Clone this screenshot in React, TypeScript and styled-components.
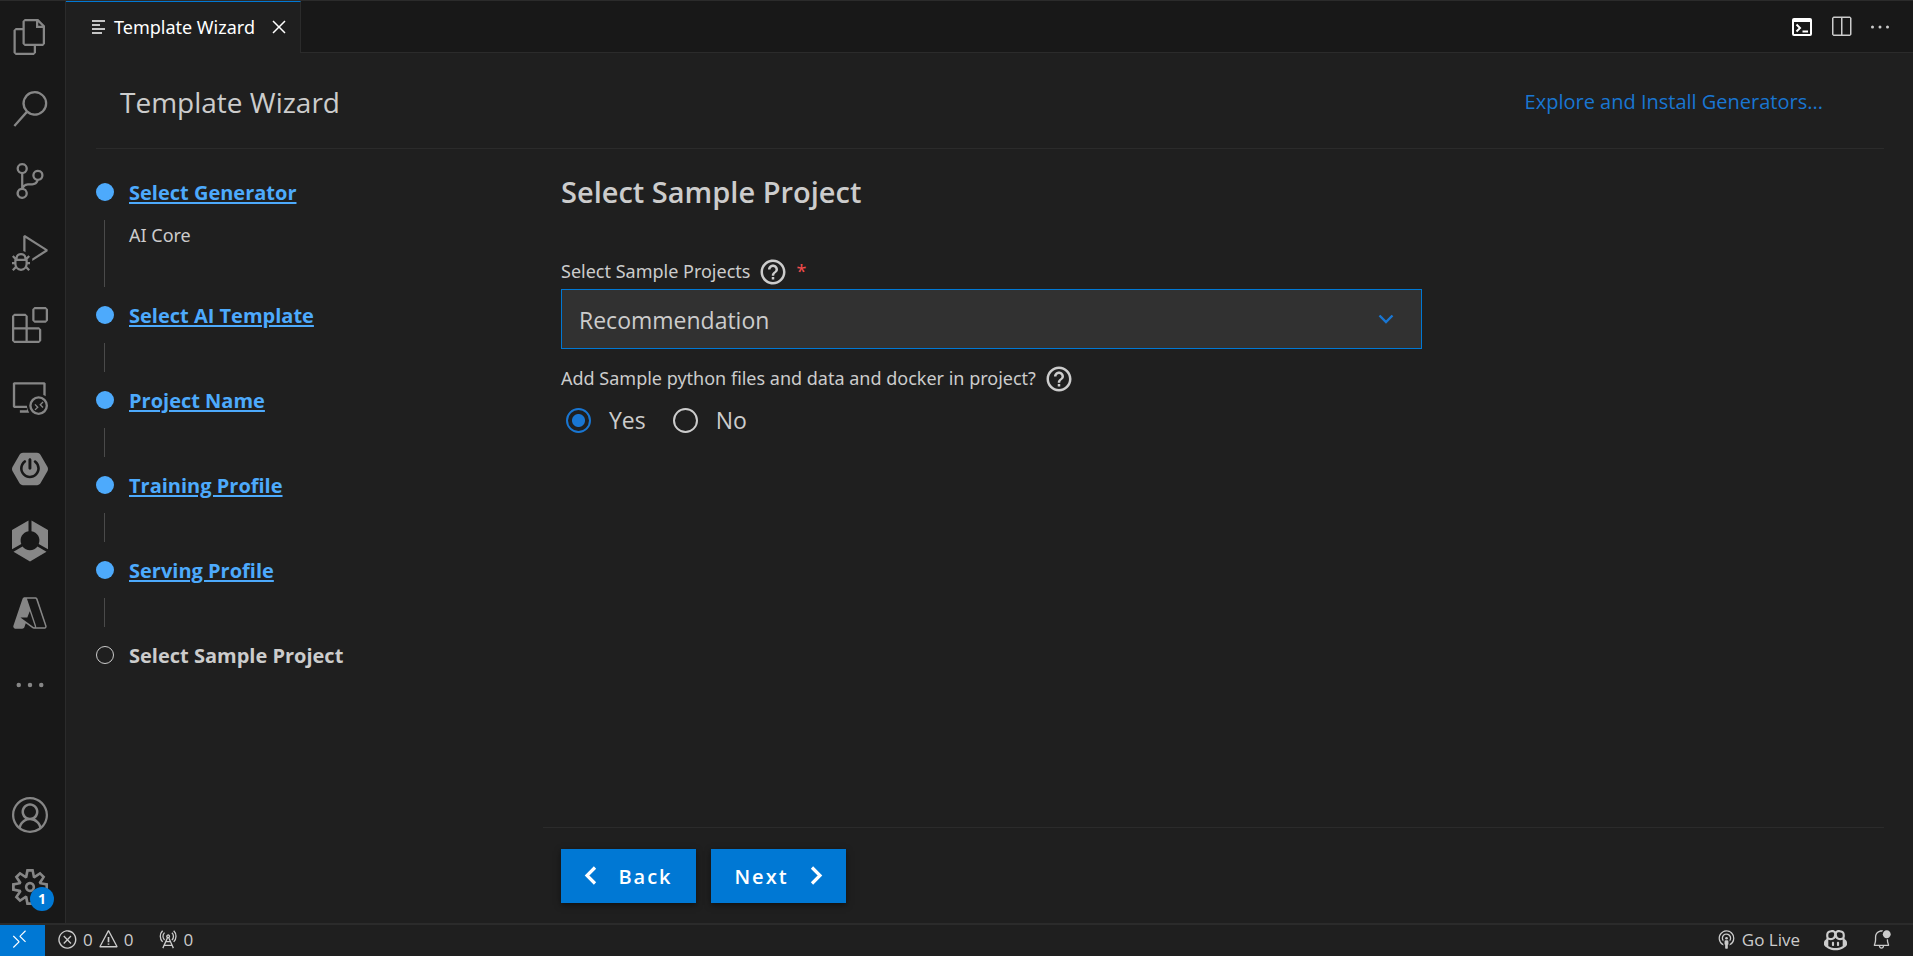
import React from "react";
import styled, { createGlobalStyle, css } from "styled-components";
import {
  VscAccount,
  VscAzure,
  VscBellDot,
  VscClose,
  VscCopilot,
  VscDebugAlt,
  VscEllipsis,
  VscError,
  VscExtensions,
  VscFiles,
  VscRadioTower,
  VscBroadcast,
  VscRemote,
  VscRemoteExplorer,
  VscSearch,
  VscSettingsGear,
  VscSourceControl,
  VscSplitHorizontal,
  VscWarning,
} from "react-icons/vsc";
import { SiSpringboot } from "react-icons/si";
import { MdHelpOutline } from "react-icons/md";

const color = {
  bar: "#181818",
  panel: "#1f1f1f",
  line: "#2b2b2b",
  text: "#cccccc",
  dim: "#868686",
  accent: "#0078d4",
  link: "#1976d2",
  step: "#4daafc",
  field: "#313131",
  error: "#f14c4c",
};

const labelFont = `"Noto Sans", "Open Sans", sans-serif`;

const GlobalStyle = createGlobalStyle`
  * { box-sizing: border-box; }
  body {
    margin: 0;
    background: ${color.panel};
    color: ${color.text};
    font-family: "Open Sans", "Noto Sans", sans-serif;
  }
  button, select { font-family: inherit; color: inherit; }
  h1, h2, p, ol { margin: 0; padding: 0; }
`;

const Window = styled.div`
  display: grid;
  grid-template: 1fr auto / auto 1fr;
  min-height: 100vh;
  border-top: 1px solid ${color.line};
`;

const ActivityBar = styled.nav`
  display: flex;
  flex-direction: column;
  justify-content: space-between;
  width: 66px;
  background: ${color.bar};
  border-right: 1px solid ${color.line};
`;

const ActivityGroup = styled.div`
  display: flex;
  flex-direction: column;
`;

const ActivityButton = styled.button<{ $tall?: boolean }>`
  position: relative;
  display: grid;
  place-items: center;
  width: 60px;
  height: 72px;
  padding: 0;
  border: 0;
  background: none;
  color: ${color.dim};
  svg {
    width: 36px;
    height: ${(p) => (p.$tall ? 42 : 36)}px;
  }
`;

const Badge = styled.span`
  position: absolute;
  right: 6px;
  bottom: 12px;
  width: 24px;
  border-radius: 12px;
  background: ${color.accent};
  color: #fff;
  font-size: 14px;
  font-weight: 700;
  line-height: 24px;
  text-align: center;
`;

const Editor = styled.div`
  display: flex;
  flex-direction: column;
  min-width: 0;
`;

const TabBar = styled.header`
  display: flex;
  justify-content: space-between;
  height: 52px;
  background: ${color.bar};
  box-shadow: inset 0 -1px ${color.line};
`;

const Tab = styled.div`
  display: flex;
  align-items: center;
  padding: 0 9px 1px 26px;
  border-top: 1px solid ${color.accent};
  border-right: 1px solid ${color.line};
  background: ${color.panel};
  color: #fff;
  font-family: ${labelFont};
  font-size: 18px;
  line-height: 24px;
`;

const TabTitle = styled.span`
  margin-left: 9px;
`;

const ToolButton = styled.button`
  display: grid;
  place-items: center;
  padding: 0;
  border: 0;
  background: none;
  svg {
    width: 24px;
    height: 24px;
  }
`;

const TabClose = styled(ToolButton)`
  margin-left: 12px;
`;

const TabActions = styled.div`
  display: flex;
  align-items: center;
  gap: 15px;
  padding-right: 21px;
`;

const Page = styled.div`
  flex: 1;
  display: flex;
  flex-direction: column;
  padding: 0 29px 0 30px;
`;

const PageHeader = styled.div`
  display: flex;
  align-items: center;
  justify-content: space-between;
  height: 96px;
  padding: 2px 61px 0 24px;
  border-bottom: 1px solid ${color.line};
`;

const Title = styled.h1`
  font-size: 28px;
  font-weight: 400;
  line-height: 40px;
`;

const ExploreLink = styled.a`
  color: ${color.link};
  font-size: 20px;
  line-height: 30px;
  text-decoration: none;
`;

const Columns = styled.div`
  flex: 1;
  display: grid;
  grid-template-columns: minmax(0, 1fr) minmax(0, 3fr);
`;

const StepList = styled.ol`
  list-style: none;
  padding-top: 29px;
`;

const StepItem = styled.li<{ $detail?: boolean }>`
  position: relative;
  display: flex;
  align-items: flex-start;
  gap: 15px;
  height: ${(p) => (p.$detail ? 123 : 85)}px;
  &:not(:last-child)::after {
    content: "";
    position: absolute;
    left: 8px;
    top: 42px;
    bottom: 14px;
    width: 1px;
    background: #4a4a4a;
  }
`;

const StepDot = styled.span<{ $current?: boolean }>`
  flex: none;
  width: 18px;
  height: 18px;
  margin-top: 5px;
  border-radius: 50%;
  ${(p) =>
    p.$current
      ? css`
          border: 1px solid ${color.text};
        `
      : css`
          background: ${color.step};
        `}
`;

const stepText = css`
  font-size: 20px;
  font-weight: 700;
  line-height: 30px;
`;

const StepLink = styled.a`
  ${stepText}
  color: ${color.step};
  text-decoration: underline;
  text-decoration-thickness: 2px;
  text-underline-offset: 2px;
`;

const StepCurrent = styled.span`
  ${stepText}
`;

const StepDetail = styled.p`
  margin-top: 14px;
  font-family: ${labelFont};
  font-size: 18px;
  line-height: 26px;
`;

const Main = styled.main`
  display: flex;
  flex-direction: column;
  justify-content: space-between;
`;

const Form = styled.form`
  padding: 23px 18px;
`;

const Heading = styled.h2`
  font-size: 29px;
  font-weight: 600;
  line-height: 40px;
`;

const LabelRow = styled.div`
  display: flex;
  align-items: center;
  gap: 8px;
  height: 36px;
  font-family: ${labelFont};
  font-size: 18px;
  line-height: 26px;
`;

const Help = styled(MdHelpOutline)`
  flex: none;
  width: 30px;
  height: 32px;
  padding-top: 2px;
`;

const Required = styled.span`
  color: ${color.error};
`;

const SelectField = styled.div`
  margin-top: 41px;
`;

const SelectBox = styled.div`
  display: grid;
  align-items: center;
  max-width: 861px;
  > * {
    grid-area: 1 / 1;
  }
  svg {
    justify-self: end;
    width: 16px;
    height: 10px;
    margin-right: 28px;
    pointer-events: none;
  }
`;

const Select = styled.select`
  appearance: none;
  width: 100%;
  height: 60px;
  padding: 2px 48px 0 17px;
  border: 1px solid ${color.accent};
  border-radius: 0;
  outline: 0;
  background: ${color.field};
  font-size: 23px;
`;

const RadioField = styled.fieldset`
  min-width: 0;
  margin: 11px 0 0;
  padding: 0;
  border: 0;
`;

const Legend = styled.legend`
  display: contents;
`;

const RadioRow = styled.div`
  display: flex;
  gap: 27px;
  padding: 1px 0 0 5px;
`;

const RadioLabel = styled.label`
  display: flex;
  align-items: center;
  gap: 18px;
  height: 46px;
  font-size: 23px;
`;

const Radio = styled.input`
  appearance: none;
  width: 25px;
  height: 25px;
  margin: 0;
  border: 2px solid ${color.text};
  border-radius: 50%;
  &:checked {
    border-color: ${color.link};
    background: radial-gradient(circle, ${color.link} 6px, transparent 7px);
  }
`;

const Actions = styled.footer`
  display: flex;
  gap: 15px;
  padding: 21px 18px 20px;
  border-top: 1px solid ${color.line};
`;

const WizardButton = styled.button`
  display: flex;
  align-items: center;
  justify-content: center;
  gap: 20px;
  min-width: 135px;
  height: 54px;
  padding: 2px 22px 0;
  border: 0;
  background: ${color.accent};
  box-shadow: 0 2px 6px rgba(0, 0, 0, 0.5);
  color: #fff;
  font-size: 20px;
  font-weight: 600;
  line-height: 30px;
  letter-spacing: 2px;
  svg {
    width: 14px;
    height: 20px;
    margin-bottom: 2px;
  }
`;

const StatusBar = styled.div`
  grid-column: 1 / -1;
  display: flex;
  height: 33px;
  border-top: 2px solid ${color.line};
  font-size: 17px;
`;

const StatusItem = styled.button<{ $large?: boolean }>`
  display: flex;
  align-items: center;
  gap: 5px;
  padding: 0 0 2px;
  border: 0;
  background: none;
  font-size: inherit;
  svg {
    width: ${(p) => (p.$large ? 23 : 21)}px;
    height: ${(p) => (p.$large ? 23 : 21)}px;
  }
`;

const RemoteItem = styled(StatusItem)`
  justify-content: center;
  width: 45px;
  padding-right: 6px;
  background: ${color.accent};
  color: #fff;
`;

const StatusGroup = styled.div`
  display: flex;
  gap: 24px;
  padding: 0 21px 0 12px;
  &:last-child {
    margin-left: auto;
  }
`;

const CubeIcon = () => (
  <svg viewBox="0 0 36 42" fill="currentColor">
    <path d="M16.5 0.5V11.2A9.3 9.3 0 0 0 9.3 24L0 29.3V10Z" />
    <path d="M19.5 0.5V11.2A9.3 9.3 0 0 1 26.7 24L36 29.3V10Z" />
    <path d="M1.5 31.8L10.5 26.5A9.3 9.3 0 0 0 25.5 26.5L34.5 31.8L18 41.5Z" />
  </svg>
);

const LinesIcon = () => (
  <svg width="13" height="14" viewBox="0 0 13 14" stroke="#c5c5c5" strokeWidth="2">
    <path d="M0 1H13M0 5H8M0 9H13M0 13H10" />
  </svg>
);

const ConsoleIcon = () => (
  <svg viewBox="0 0 24 24" fill="none" stroke="#fff" strokeWidth="2">
    <rect x="3" y="4" width="18" height="16" rx="1" />
    <path d="M3 5.5H21" strokeWidth="3" />
    <path d="M6.5 9.5L10 13L6.5 16.5M12.5 16.5H18" />
  </svg>
);

const CaretDown = () => (
  <svg viewBox="0 0 16 10" fill="none" stroke={color.link} strokeWidth="2.4">
    <path d="M1.5 1.5L8 8L14.5 1.5" />
  </svg>
);

const Arrow = ({ d }: { d: string }) => (
  <svg viewBox="0 0 14 20" fill="none" stroke="#fff" strokeWidth="3.2">
    <path d={d} />
  </svg>
);

const activities = [
  { name: "Explorer", icon: <VscFiles /> },
  { name: "Search", icon: <VscSearch /> },
  { name: "Source Control", icon: <VscSourceControl /> },
  { name: "Run and Debug", icon: <VscDebugAlt /> },
  { name: "Extensions", icon: <VscExtensions /> },
  { name: "Remote Explorer", icon: <VscRemoteExplorer /> },
  { name: "Spring Boot Dashboard", icon: <SiSpringboot /> },
  { name: "Cloud Tools", icon: <CubeIcon />, tall: true },
  { name: "Azure", icon: <VscAzure /> },
  { name: "Additional Views", icon: <VscEllipsis /> },
];

const steps = [
  { name: "Select Generator", detail: "AI Core" },
  { name: "Select AI Template" },
  { name: "Project Name" },
  { name: "Training Profile" },
  { name: "Serving Profile" },
  { name: "Select Sample Project", current: true },
];

export default function App() {
  return (
    <>
      <GlobalStyle />
      <Window>
        <ActivityBar>
          <ActivityGroup>
            {activities.map((a) => (
              <ActivityButton key={a.name} aria-label={a.name} $tall={a.tall}>
                {a.icon}
              </ActivityButton>
            ))}
          </ActivityGroup>
          <ActivityGroup>
            <ActivityButton aria-label="Accounts">
              <VscAccount />
            </ActivityButton>
            <ActivityButton aria-label="Manage">
              <VscSettingsGear />
              <Badge>1</Badge>
            </ActivityButton>
          </ActivityGroup>
        </ActivityBar>

        <Editor>
          <TabBar>
            <Tab>
              <LinesIcon />
              <TabTitle>Template Wizard</TabTitle>
              <TabClose aria-label="Close">
                <VscClose />
              </TabClose>
            </Tab>
            <TabActions>
              <ToolButton aria-label="Open console">
                <ConsoleIcon />
              </ToolButton>
              <ToolButton aria-label="Split editor">
                <VscSplitHorizontal />
              </ToolButton>
              <ToolButton aria-label="More actions">
                <VscEllipsis />
              </ToolButton>
            </TabActions>
          </TabBar>

          <Page>
            <PageHeader>
              <Title>Template Wizard</Title>
              <ExploreLink href="#generators">Explore and Install Generators...</ExploreLink>
            </PageHeader>
            <Columns>
              <StepList>
                {steps.map((s) => (
                  <StepItem key={s.name} $detail={!!s.detail}>
                    <StepDot $current={s.current} />
                    <div>
                      {s.current ? (
                        <StepCurrent>{s.name}</StepCurrent>
                      ) : (
                        <StepLink href="#step">{s.name}</StepLink>
                      )}
                      {s.detail && <StepDetail>{s.detail}</StepDetail>}
                    </div>
                  </StepItem>
                ))}
              </StepList>
              <Main>
                <Form>
                  <Heading>Select Sample Project</Heading>
                  <SelectField>
                    <LabelRow>
                      <label htmlFor="sample">Select Sample Projects</label>
                      <Help />
                      <Required>*</Required>
                    </LabelRow>
                    <SelectBox>
                      <Select id="sample" defaultValue="Recommendation">
                        <option>Recommendation</option>
                      </Select>
                      <CaretDown />
                    </SelectBox>
                  </SelectField>
                  <RadioField>
                    <Legend>
                      <LabelRow>
                        <span>Add Sample python files and data and docker in project?</span>
                        <Help />
                      </LabelRow>
                    </Legend>
                    <RadioRow>
                      <RadioLabel>
                        <Radio type="radio" name="files" defaultChecked />
                        Yes
                      </RadioLabel>
                      <RadioLabel>
                        <Radio type="radio" name="files" />
                        No
                      </RadioLabel>
                    </RadioRow>
                  </RadioField>
                </Form>
                <Actions>
                  <WizardButton type="button">
                    <Arrow d="M11 1.5L3 9.5L11 17.5" />
                    Back
                  </WizardButton>
                  <WizardButton type="button">
                    Next
                    <Arrow d="M3 1.5L11 9.5L3 17.5" />
                  </WizardButton>
                </Actions>
              </Main>
            </Columns>
          </Page>
        </Editor>

        <StatusBar>
          <RemoteItem aria-label="Remote window">
            <VscRemote />
          </RemoteItem>
          <StatusGroup>
            <StatusItem>
              <VscError />
              <span>0</span>
              <VscWarning />
              <span>0</span>
            </StatusItem>
            <StatusItem>
              <VscRadioTower />
              <span>0</span>
            </StatusItem>
          </StatusGroup>
          <StatusGroup>
            <StatusItem>
              <VscBroadcast />
              <span>Go Live</span>
            </StatusItem>
            <StatusItem aria-label="Copilot" $large>
              <VscCopilot />
            </StatusItem>
            <StatusItem aria-label="Notifications">
              <VscBellDot />
            </StatusItem>
          </StatusGroup>
        </StatusBar>
      </Window>
    </>
  );
}
